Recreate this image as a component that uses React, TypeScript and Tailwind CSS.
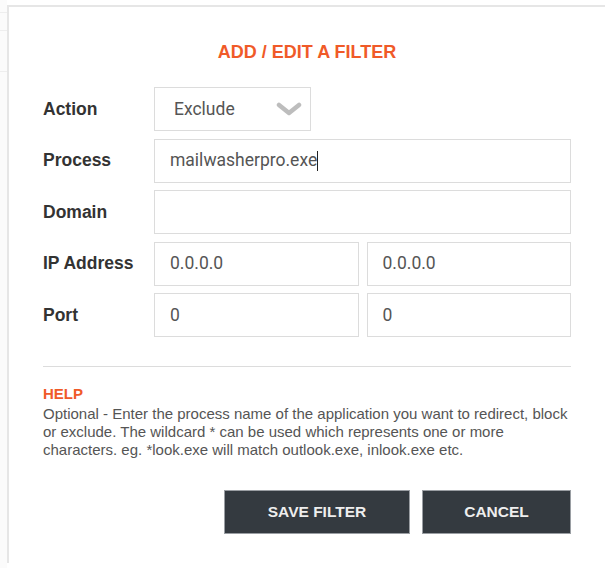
import React from "react"

const labelCls = "w-[111px] shrink-0 text-[17.5px] font-bold text-[#333]"
const inputCls =
  "flex-1 h-[44px] border border-[#dcdcdc] bg-white px-[15px] flex items-center text-[17.5px] text-[#555] font-['Roboto',sans-serif]"

function Row({ label, children }: { label: string; children: React.ReactNode }) {
  return (
    <div className="flex items-center h-[44px]">
      <div className={labelCls}>{label}</div>
      <div className="flex-1 flex gap-[8px]">{children}</div>
    </div>
  )
}

export default function App() {
  return (
    <div className="w-[605px] h-[568px] overflow-hidden bg-white flex font-['Liberation_Sans',Arial,sans-serif]">
      {/* page behind the modal */}
      <div className="w-[7px] shrink-0 bg-[#fbfbfb] flex flex-col">
        <div className="h-[12px]" />
        <div className="h-px bg-[#eee]" />
        <div className="h-[17px]" />
        <div className="h-px bg-[#eee]" />
        <div className="h-[40px]" />
        <div className="h-px bg-[#eee]" />
      </div>
      <div className="mt-[5px] h-[558px] w-[600px] shrink-0 border-l-2 border-t-2 border-[#e6e6e6] bg-white pl-[34px] pr-[36px] pt-[34px]">
        <h2 className="text-center text-[18px] leading-[22px] font-bold text-[#f05a28] uppercase">
          Add / Edit a Filter
        </h2>

        <div className="mt-[24px] flex flex-col gap-[7.5px]">
          <Row label="Action">
            <div className="w-[157px] h-[44px] border border-[#dcdcdc] bg-white pl-[19px] pr-[8px] flex items-center justify-between text-[17.5px] text-[#555] font-['Roboto',sans-serif]">
              <span>Exclude</span>
              <svg width="26" height="16" viewBox="0 0 26 16">
                <path
                  d="M3 4 L13 12 L23 4"
                  fill="none"
                  stroke="#bdbdbd"
                  strokeWidth="4.5"
                  strokeLinecap="round"
                  strokeLinejoin="round"
                />
              </svg>
            </div>
          </Row>
          <Row label="Process">
            <div className={inputCls}>
              <span>mailwasherpro.exe</span>
              <span className="inline-block w-px h-[20px] bg-[#222]" />
            </div>
          </Row>
          <Row label="Domain">
            <div className={inputCls} />
          </Row>
          <Row label="IP Address">
            <div className={inputCls}>0.0.0.0</div>
            <div className={inputCls}>0.0.0.0</div>
          </Row>
          <Row label="Port">
            <div className={inputCls}>0</div>
            <div className={inputCls}>0</div>
          </Row>
        </div>

        <div className="mt-[29px] h-px bg-[#dcdcdc]" />

        <div className="mt-[18px] text-[15px] leading-[18px] font-bold text-[#f05a28]">HELP</div>
        <p className="mt-[2px] text-[15px] leading-[18px] text-[#555]">
          Optional - Enter the process name of the application you want to redirect, block or exclude. The
          wildcard * can be used which represents one or more characters. eg. *look.exe will match outlook.exe,
          inlook.exe etc.
        </p>

        <div className="mt-[31px] flex justify-end gap-[12px]">
          <button className="w-[186px] h-[44px] bg-[#343a40] border border-[#9a9ea3] text-[15.5px] font-bold text-[#eee] uppercase">
            Save Filter
          </button>
          <button className="w-[149px] h-[44px] bg-[#343a40] border border-[#9a9ea3] text-[15.5px] font-bold text-[#eee] uppercase">
            Cancel
          </button>
        </div>
      </div>
    </div>
  )
}
